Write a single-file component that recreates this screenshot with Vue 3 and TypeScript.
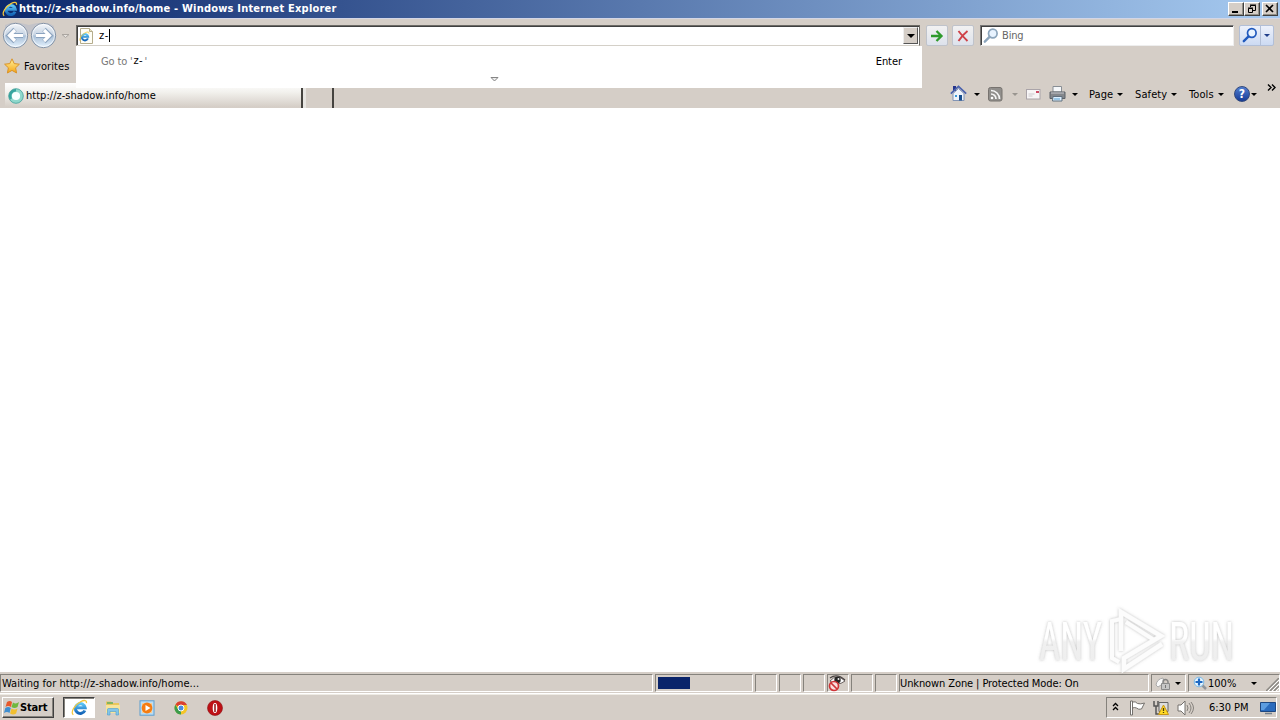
<script setup lang="ts">
interface MenuItem {
  label: string
  width: number
}

const pageTitle = 'http://z-shadow.info/home'
const typed = 'z-'
const menus: MenuItem[] = [
  { label: 'Page', width: 46 },
  { label: 'Safety', width: 54 },
  { label: 'Tools', width: 44 },
]
const emptyPanes = [1, 2, 3]
</script>

<template>
  <div class="window">
    <svg class="defs" width="0" height="0">
      <defs>
        <linearGradient id="ieBlue" x1="0" y1="0" x2="0" y2="1">
          <stop offset="0" stop-color="#5cc4f5" />
          <stop offset="1" stop-color="#1565b8" />
        </linearGradient>
        <linearGradient id="orb" x1="0" y1="0" x2="0" y2="1">
          <stop offset="0" stop-color="#f4f7fb" />
          <stop offset=".48" stop-color="#c6d3e2" />
          <stop offset=".52" stop-color="#a9bfd7" />
          <stop offset="1" stop-color="#e6f4ff" />
        </linearGradient>
        <linearGradient id="gold" x1="0" y1="0" x2="0" y2="1">
          <stop offset="0" stop-color="#fff3a0" />
          <stop offset="1" stop-color="#f6a512" />
        </linearGradient>
        <symbol id="ie" viewBox="0 0 16 16">
          <path d="M13 10.800A4.600 4.600 0 1 1 13.300 8.300H5" fill="none" stroke="url(#ieBlue)" stroke-width="2.900" />
          <path d="M2.200 14.800C-.8 12.500 3.600 5.400 9 2.600c3.200-1.700 6-1.800 5.500 1.200" fill="none" stroke="#f4c63c" stroke-width="1.200" />
        </symbol>
        <symbol id="lens" viewBox="0 0 16 16">
          <path d="M6.800 9.200L1.800 14.200" stroke="currentColor" stroke-width="2.400" stroke-linecap="round" />
          <circle cx="9.800" cy="6" r="4.300" fill="#e8f3ff" stroke="currentColor" stroke-width="1.700" />
        </symbol>
      </defs>
    </svg>

    <header class="titlebar">
      <svg class="title-ie" width="16" height="16"><use href="#ie" /></svg>
      <span class="title">{{ pageTitle }} - Windows Internet Explorer</span>
      <div class="controls">
        <span class="ctl"><svg width="13" height="11"><path d="M3 9h6" stroke="#000" stroke-width="2" /></svg></span>
        <span class="ctl"><svg width="13" height="11"><path d="M5.500 4V2.500h5v5H8M5 2h6M3.500 5.500h4v4h-4zM3 5h5" fill="none" stroke="#000" /></svg></span>
        <span class="ctl last"><svg width="13" height="11"><path d="M3 2l7 7M10 2L3 9" stroke="#000" stroke-width="1.600" /></svg></span>
      </div>
    </header>

    <div class="nav">
      <svg class="orbs" width="72" height="32" viewBox="0 0 72 32">
        <path d="M5 6Q14 1 29 6Q45 1 54 7V15H5Z" fill="#c3c3c8" />
        <g v-for="x in [15.5, 43.5]" :key="x">
          <circle :cx="x" cy="16.500" r="12.200" fill="url(#orb)" stroke="#8593a6" />
          <circle :cx="x" cy="16.500" r="11" fill="none" stroke="#fff" stroke-opacity=".65" />
        </g>
        <path d="M23 16.500H9M15 10.500l-6 6 6 6M36 16.500h14M44 10.500l6 6-6 6" fill="none" stroke="#8ba3bf" stroke-width="4.800" />
        <path d="M23 16.500H10M15 11l-5.500 5.500 5.500 5.500M36 16.500h13M44 11l5.500 5.500-5.500 5.500" fill="none" stroke="#fff" stroke-width="3.200" />
        <path d="M62 15.500h7l-3.500 3z" fill="#e7e3df" stroke="#aaa5a0" />
      </svg>
      <div class="address">
        <svg width="15" height="16" viewBox="0 0 15 16">
          <path d="M1.500.500h9l3 3v12h-12z" fill="#fffef6" stroke="#b5ad8d" />
          <path d="M10.500.500v3h3" fill="#e9e3c6" stroke="#b5ad8d" />
          <use href="#ie" x="0" y="3" width="11" height="11" />
        </svg>
        <span class="typed">{{ typed }}</span><i class="caret" />
        <span class="drop"><i class="arrow" /></span>
      </div>
      <span class="tool go"><svg width="16" height="16"><path d="M2 8h10M7.500 3l5 5-5 5" fill="none" stroke="#2e9a2c" stroke-width="2.300" /></svg></span>
      <span class="tool stop"><svg width="16" height="16"><path d="M3.500 3q3 4 9 10M12.500 3q-5 4-9 10" fill="none" stroke="#cf4148" stroke-width="1.900" /></svg></span>
      <div class="search">
        <svg width="16" height="17" viewBox="0 0 16 16"><use href="#lens" /></svg>
        <span>Bing</span>
      </div>
      <div class="search-go">
        <span class="find"><svg width="16" height="16" viewBox="0 0 16 16"><use href="#lens" /></svg></span>
        <span class="more"><i class="arrow small" /></span>
      </div>
    </div>

    <div class="favorites">
      <svg width="16" height="16" viewBox="0 0 16 16"><path d="M8 .8l2.200 4.800 5.200.600-3.800 3.600 1 5.200L8 12.400 3.400 15l1-5.200L.6 6.200l5.200-.600z" fill="url(#gold)" stroke="#d9932a" /></svg>
      <span>Favorites</span>
    </div>

    <div class="tabs">
      <div class="tab">
        <svg width="16" height="16"><circle cx="8" cy="8" r="5.800" fill="#f7ffff" stroke="#8fd8cc" stroke-width="3.400" /><path d="M8 2.200A5.800 5.800 0 0 0 3 11" fill="none" stroke="#35a5a0" stroke-width="2.600" /><circle cx="8" cy="8" r="7.300" fill="none" stroke="#3f9a95" stroke-width=".7" /></svg>
        <span>{{ pageTitle }}</span>
      </div>
      <div class="newtab" />
      <div class="commands">
        <svg class="home" width="17" height="17" viewBox="0 0 17 17"><path d="M3 1h3v5H3z" fill="#26358c" /><path d="M3 8.500l5.500-5 5.500 5V15.500H3z" fill="#eef3fb" stroke="#8395b5" /><path d="M.8 8.700L8.500 1.500l7.700 7.200" fill="none" stroke="#4961ad" stroke-width="1.700" /><path d="M9 10h3v5.500H9z" fill="#174d8d" /><path d="M5 10h2v2H5z" fill="#3998d7" /></svg>
        <i class="arrow small a1" />
        <svg class="rss" width="15" height="15" viewBox="0 0 15 15"><rect x=".5" y=".5" width="13.500" height="13.500" rx="2" fill="#918f8c" stroke="#77736f" /><path d="M3 7a5 5 0 0 1 5 5M3 3.500A8.500 8.500 0 0 1 11.500 12" fill="none" stroke="#f6f6f6" stroke-width="1.700" /><circle cx="4" cy="11" r="1.300" fill="#fff" /></svg>
        <i class="arrow small faded a2" />
        <svg class="mail" width="15" height="12" viewBox="0 0 15 12"><rect x=".5" y="1.500" width="13.500" height="9.500" fill="#f7f5f6" stroke="#aaa4a9" /><path d="M2.500 6h6M2.500 8h4" stroke="#cbc8cc" /><path d="M10 3h3v2h-3z" fill="#cc4964" /></svg>
        <svg class="printer" width="17" height="16" viewBox="0 0 17 16"><path d="M4 .5h8.500V6H4z" fill="#f6f8fa" stroke="#888e94" /><path d="M1 6h15v6.500H1z" fill="#84878c" stroke="#5c6268" /><path d="M2 7h13" stroke="#c6c8cc" /><path d="M4 10.500h9v4.500H3.500z" fill="#dcefff" stroke="#61707e" /><path d="M5 13h6" stroke="#59a0d0" /></svg>
        <i class="arrow small a3" />
        <div class="menus">
          <span v-for="menu in menus" :key="menu.label" class="menu" :style="{ width: menu.width + 'px' }"><span>{{ menu.label }}</span><i class="arrow small" /></span>
        </div>
        <span class="help">?</span><i class="arrow small a4" />
        <svg class="chevrons" width="9" height="7"><path d="M1 .5l3 3-3 3M5 .5l3 3-3 3" fill="none" stroke="#000" stroke-width="1.400" /></svg>
      </div>
    </div>

    <div class="suggestions">
      <div class="suggestion"><span class="goto">Go to '</span><span class="term">{{ typed }}</span><span class="quote">'</span><span class="enter">Enter</span></div>
      <svg class="expand" width="11" height="7"><path d="M2 1.500h7l-3.500 3.500z" fill="#eee" stroke="#858585" /></svg>
    </div>

    <main class="page">
      <svg class="watermark" width="230" height="86" viewBox="0 0 230 86">
        <defs>
          <linearGradient id="mark" gradientUnits="userSpaceOnUse" x1="0" y1="20" x2="0" y2="64">
            <stop offset=".42" stop-color="#fff" />
            <stop offset=".5" stop-color="#f0f0f0" />
            <stop offset="1" stop-color="#eee" />
          </linearGradient>
          <filter id="soft" x="-10%" y="-10%" width="120%" height="120%"><feDropShadow dx="0" dy="0" stdDeviation="1.800" flood-color="#777" flood-opacity=".5" /></filter>
        </defs>
        <g filter="url(#soft)" fill="url(#mark)">
          <text x="10" y="60" textLength="63" lengthAdjust="spacingAndGlyphs">ANY</text>
          <text x="140" y="60" textLength="65" lengthAdjust="spacingAndGlyphs">RUN</text>
          <g fill="none" stroke="#fcfcfc" stroke-width="4.500">
            <path d="M92 51V12l40 24-37 22v11l38-25" />
            <path d="M92 19l-9 2v37l7 4M97 22l28 18" stroke-width="4" />
          </g>
        </g>
      </svg>
    </main>

    <footer class="status">
      <div class="pane waiting"><span>Waiting for {{ pageTitle }}...</span></div>
      <div class="pane progress"><i /></div>
      <div v-for="n in emptyPanes" :key="n" class="pane cell" />
      <div class="pane cell">
        <svg width="20" height="18" viewBox="0 0 20 18"><path d="M3 7Q10-1 18 7Q10 13 3 7Z" fill="#fff" stroke="#685f5e" /><circle cx="10.500" cy="6" r="3.200" fill="#252525" /><circle cx="11.500" cy="5" r="1" fill="#eee" /><path d="M3 4Q10-1 18 6" fill="none" stroke="#4a4443" stroke-width="1.300" /><circle cx="7" cy="12" r="4.500" fill="#f9dddd" stroke="#cf3438" stroke-width="1.700" /><path d="M4 9l6 6" stroke="#cf3438" stroke-width="1.700" /></svg>
      </div>
      <div class="pane cell" /><div class="pane cell" />
      <div class="pane zone"><span>Unknown Zone | Protected Mode: On</span></div>
      <div class="pane lock">
        <svg width="17" height="15" viewBox="0 0 17 15"><path d="M1 9Q2 3 8 2l1 5-6 4z" fill="#f9f9f9" stroke="#aaa" /><path d="M8 8V6a2.500 2.500 0 0 1 5 0v2" fill="none" stroke="#858585" stroke-width="1.500" /><path d="M6.500 7.500h8v6h-8z" fill="#c6c6c6" stroke="#8b8b8b" /><path d="M10.500 9v3" stroke="#777" /></svg>
        <i class="arrow small" />
      </div>
      <div class="pane zoomlevel">
        <svg width="15" height="15" viewBox="0 0 15 15"><path d="M9 9l4 4" stroke="#91959b" stroke-width="2.500" /><circle cx="6" cy="6" r="4.800" fill="#e8f6ff" stroke="#7ab8e5" /><path d="M6 2.500v7M2.500 6h7" stroke="#1f69c3" stroke-width="2.200" /></svg>
        <span>100%</span><i class="arrow small" />
        <svg class="grip" width="13" height="13"><path d="M0 13L13 0M4 13l9-9M8 13l5-5" stroke="#8c8984" stroke-width="1.500" /><path d="M2 13L13 2M6 13l7-7M10 13l3-3" stroke="#fff" /></svg>
      </div>
    </footer>

    <div class="taskbar">
      <div class="start">
        <svg width="17" height="16" viewBox="0 0 17 16"><path d="M3 2q3-2 5 0L7 7Q4 5 1.500 7z" fill="#e7592b" /><path d="M9 2.500q3 2 6-.500L13.500 7q-3 2-6 0z" fill="#70b83f" /><path d="M1.300 8q3-2 5.500 0L5.500 13Q3 11 0 13z" fill="#3f8ed0" /><path d="M7.500 8.500q3 2 6 0l-1.400 5q-3 2-6 0z" fill="#f1bf30" /></svg>
        <span>Start</span>
      </div>
      <div class="launch active"><svg width="17" height="17" viewBox="0 0 16 16"><use href="#ie" /></svg></div>
      <div class="quick">
        <svg width="16" height="16" viewBox="0 0 16 16"><path d="M1 3V1.500h5L7.500 3H14v10H1z" fill="#e9c65c" /><path d="M2 3h6" stroke="#5fae61" stroke-width="1.500" /><path d="M1 5h14v8H1z" fill="#f7e49b" /><path d="M2.500 15V9.500q0-1 1-1h9q1 0 1 1V15h-2.500v-3.500H5V15z" fill="#82c5ea" stroke="#4b9dcc" stroke-width=".6" /></svg>
        <svg width="16" height="16" viewBox="0 0 16 16"><rect x="1" y=".8" width="14" height="14.400" fill="#b9dcf4" stroke="#5d9ed0" /><path d="M3 3h10v10H3z" fill="#f8cf96" /><circle cx="8" cy="8" r="5.400" fill="#f47c13" /><path d="M6.500 5l5 3-5 3z" fill="#fff" /></svg>
        <svg width="16" height="16" viewBox="0 0 16 16"><circle cx="8" cy="8" r="6.500" fill="#f4c526" /><path d="M8 8L2.400 4.700A6.500 6.500 0 0 1 14 5H8z" fill="#da4031" /><path d="M8 8v6.500A6.500 6.500 0 0 1 2.400 4.700l3 5z" fill="#3c9c4b" /><circle cx="8" cy="8" r="3" fill="#4a8ce0" stroke="#fff" /></svg>
        <svg width="16" height="16" viewBox="0 0 16 16"><circle cx="8" cy="8" r="7.500" fill="#be1015" stroke="#8c1215" stroke-width=".6" /><ellipse cx="8" cy="8" rx="2.300" ry="5" fill="#fff" /><path d="M8 4v8" stroke="#8e1215" stroke-width="1.500" /></svg>
      </div>
      <div class="tray">
        <svg width="9" height="11"><path d="M2 4l2.500-2.500L7 4M2 8l2.500-2.500L7 8" fill="none" stroke="#000" stroke-width="1.300" /></svg>
        <svg class="flag" width="17" height="16" viewBox="0 0 17 16"><path d="M1.500 1h2v14h-2z" fill="#fff" stroke="#74716d" /><path d="M3.500 2q3-1 5 1.500 3 1 7-.500l-3 6q-3 1-5-1-2-1-4 0z" fill="#fff" stroke="#74716d" /></svg>
        <svg class="network" width="17" height="16" viewBox="0 0 17 16"><path d="M1 1v5h4V1M3 6v8h3" fill="none" stroke="#555" stroke-width="1.500" /><path d="M6 2.500h9v9H6z" fill="#ddd" stroke="#656565" /><path d="M10.500 5l5 9.500h-10z" fill="#ffda25" stroke="#c89616" /><path d="M10.500 8v3M10.500 12v1" stroke="#4b3c0b" stroke-width="1.300" /></svg>
        <svg class="sound" width="18" height="16" viewBox="0 0 18 16"><path d="M1 5h3l4-4v14l-4-4H1z" fill="#fff" stroke="#74716d" /><path d="M10 5q2 3 0 6M12 3q4 5 0 10M14 2q5 6 0 12" fill="none" stroke="#85817c" /></svg>
        <span>6:30 PM</span>
        <svg class="desktop" width="16" height="14" viewBox="0 0 16 14"><path d="M.5 1.500h15v9H.5z" fill="#2a6bbd" stroke="#1d4781" /><path d="M1 2h9L4 9H1z" fill="#5b9ce0" /><path d="M5 12.500h7" stroke="#75808c" stroke-width="1.500" /></svg>
      </div>
    </div>
  </div>
</template>

<style>
body { margin: 0; }
</style>

<style scoped>
.window { position: relative; display: flex; flex-direction: column; width: 1280px; height: 720px; box-sizing: border-box; background: #d5cec7; overflow: hidden; font: 11px/14px "DejaVu Sans Condensed", "DejaVu Sans", sans-serif; font-stretch: condensed; color: #000; letter-spacing: -.15px; white-space: nowrap; }
.window * { box-sizing: border-box; }
svg { display: block; flex: none; }
.defs { position: absolute; }
.arrow { display: block; width: 0; height: 0; flex: none; border: 4px solid transparent; border-top-color: #000; border-bottom: 0; }
.small { border-width: 3px; border-bottom: 0; }
.faded { border-top-color: #999590; }
.titlebar { display: flex; align-items: center; height: 18px; flex: none; background: linear-gradient(90deg, #0c286c, #a6caf0); }
.title-ie { margin-left: 2px; }
.title { margin-left: 1px; color: #fff; font-weight: bold; letter-spacing: .2px; }
.controls { display: flex; margin-left: auto; margin-right: 2px; }
.ctl { width: 16px; height: 14px; background: #d5cec7; border: 1px solid; border-color: #fff #404040 #404040 #fff; box-shadow: inset -1px -1px #929088; }
.last { margin-left: 2px; }
.nav { display: flex; height: 34px; flex: none; align-items: flex-start; padding-top: 6px; border-top: 1px solid #d3d6e6; }
.orbs { margin: -6px 4px 0 0; }
.address { display: flex; align-items: center; width: 844px; height: 21px; background: #fff; border: 1px solid #6c6a65; border-bottom-color: #d4d0c8; box-shadow: inset 1px 1px #404040; padding-left: 2px; }
.typed { margin: 1px 0 0 5px; letter-spacing: .6px; }
.caret { width: 1px; height: 13px; background: #000; }
.drop { display: flex; align-items: center; justify-content: center; width: 15px; height: 17px; margin: 0 1px 0 auto; background: #d5cec7; border: 1px solid; border-color: #eee #555 #555 #eee; }
.tool { display: grid; place-items: center; width: 22px; height: 21px; background: linear-gradient(#f2f1f1, #dde2ec); border: 1px solid #bfc3cb; border-radius: 2px; }
.go { margin-left: 6px; }
.stop { margin-left: 4px; }
.search { display: flex; align-items: center; margin-left: 6px; width: 254px; height: 21px; padding-left: 2px; background: #fff; border: 1px solid #777; border-right-color: #eee; border-bottom-color: #eee; box-shadow: inset 1px 1px #404040; color: #666; }
.search svg { color: #8ca5bc; }
.search span { margin: 1px 0 0 3px; }
.search-go { display: flex; margin-left: 5px; height: 21px; width: 35px; background: linear-gradient(#edf1fb, #ccdaf2); border: 1px solid #b2bfd7; border-radius: 2px; color: #2059bd; }
.find { width: 21px; padding: 1px 2px; border-right: 1px solid #b2bfd7; }
.more { width: 12px; display: grid; place-items: center; }
.more .arrow { border-top-color: #203f8a; }
.favorites { display: flex; height: 28px; flex: none; align-items: center; padding-left: 4px; }
.favorites span { margin: 1px 0 0 4px; letter-spacing: .1px; }
.tabs { display: flex; height: 28px; flex: none; align-items: flex-end; }
.tab { display: flex; align-items: center; width: 298px; height: 25px; margin-left: 5px; padding-left: 3px; background: linear-gradient(#fff, #f3f2ee 35%, #d5cec7 95%); border-right: 2px solid #45433f; }
.tab span { margin: 1px 0 0 2px; letter-spacing: .03px; }
.newtab { width: 31px; height: 20px; border-right: 2px solid #45433f; border-left: 3px solid #e7e5e1; background: #d5cec7; }
.commands { display: flex; align-items: center; height: 28px; margin-left: 616px; width: 330px; }
.home { margin-top: -1px; }
.a1 { margin-left: 7px; }
.rss { margin: 1px 0 0 8px; }
.a2 { margin-left: 9px; }
.mail { margin-left: 8px; }
.printer { margin-left: 8px; }
.a3 { margin-left: 6px; }
.menus { display: flex; margin-left: 11px; width: 145px; }
.menu { display: flex; align-items: center; flex: none; letter-spacing: .1px; padding-top: 1px; }
.menu .arrow { margin-left: 4px; }
.help { width: 16px; height: 16px; margin-left: 0; border: 1px solid #32497d; border-radius: 50%; background: linear-gradient(#527ed0, #173c96); color: #fff; font-weight: bold; font-size: 12px; text-align: center; letter-spacing: 0; }
.a4 { margin-left: 1px; }
.chevrons { margin: -13px 0 0 10px; }
.suggestions { position: absolute; left: 76px; top: 46px; width: 846px; height: 42px; background: #fff; z-index: 2; }
.suggestion { display: flex; height: 23px; padding: 9px 20px 0 25px; }
.goto { color: #777; }
.term { margin: -1px 0 0 1px; letter-spacing: .1px; }
.quote { color: #777; margin-left: 2px; }
.enter { margin-left: auto; letter-spacing: -.05px; }
.expand { margin: 7px 0 0 413px; }
.page { display: flex; justify-content: flex-end; align-items: flex-end; height: 564px; flex: none; background: #fff; }
.watermark { margin-right: 21px; margin-bottom: -14px; z-index: 1; font-family: Roboto, sans-serif; font-size: 53px; line-height: normal; letter-spacing: 0; font-weight: 400; overflow: visible; }
.status { display: flex; height: 22px; flex: none; gap: 2px; padding: 2px 0; border-bottom: 1px solid #fff; }
.pane { display: flex; align-items: center; flex: none; height: 18px; border: 1px solid; border-color: #85827c #fff #fff #85827c; }
.pane > span { padding-top: 1px; }
.waiting { width: 653px; padding-left: 1px; letter-spacing: .04px; }
.progress { width: 98px; padding-left: 2px; }
.progress i { width: 32px; height: 12px; background: #0a246a; }
.cell { width: 22px; }
.cell svg { margin-left: -1px; }
.zone { width: 250px; padding-left: 0; letter-spacing: -.1px; }
.lock { width: 35px; padding-left: 3px; }
.lock .arrow { margin-left: 3px; }
.zoomlevel { width: 92px; padding-left: 4px; }
.zoomlevel span { width: 30px; margin-left: 0; letter-spacing: 0; }
.zoomlevel .arrow { margin-left: 14px; }
.grip { align-self: flex-end; margin-left: 9px; }
.taskbar { display: flex; align-items: center; height: 26px; flex: none; padding: 0 2px; border-top: 1px solid #eeebe4; }
.start { display: flex; align-items: center; width: 52px; height: 21px; padding-left: 1px; border: 1px solid; border-color: #fff #404040 #404040 #fff; box-shadow: inset -1px -1px #85827c; font-weight: bold; letter-spacing: -.15px; }
.start span { margin-left: -1px; }
.launch { display: flex; align-items: center; justify-content: center; width: 32px; height: 21px; margin-left: 9px; background: #fff; border: 1px solid; border-color: #404040 #fff #fff #404040; box-shadow: inset 1px 1px #85827c; }
.quick { display: flex; gap: 18px; margin-left: 10px; }
.tray { display: flex; align-items: center; height: 21px; width: 171px; margin-left: auto; margin-right: 1px; padding-left: 4px; border: 1px solid; border-color: #85827c #fff #fff #85827c; }
.flag { margin-left: 9px; }
.network { margin-left: 7px; }
.sound { margin-left: 7px; }
.tray span { width: 40px; margin-left: 14px; letter-spacing: -.05px; }
.desktop { margin-left: auto; }
</style>
